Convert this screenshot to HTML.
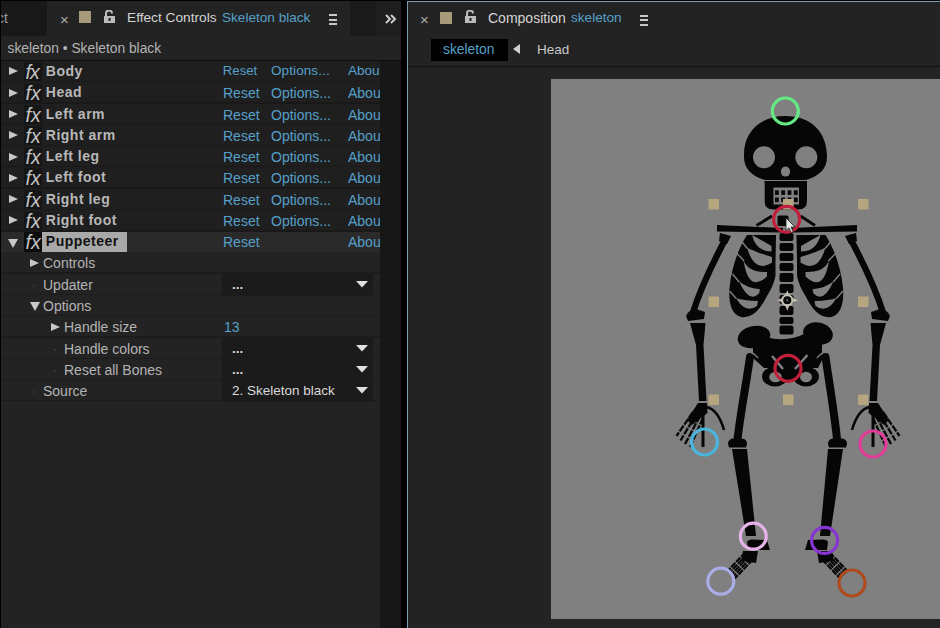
<!DOCTYPE html>
<html><head><meta charset="utf-8">
<style>
*{margin:0;padding:0;box-sizing:border-box}
html,body{width:940px;height:628px;overflow:hidden;background:#000}
body{position:relative;font-family:"Liberation Sans",sans-serif;font-size:14px;color:#b8b8b8}
.a{position:absolute}
.t{position:absolute;white-space:nowrap;line-height:16px}
.blue{color:#56a0ca}
#lp{left:1px;top:1px;width:400px;height:627px;background:#232323;overflow:hidden}
#rp{left:407px;top:1px;width:533px;height:627px;background:#232323;overflow:hidden;border-left:1px solid #7a9cb2;border-top:1px solid #7a9cb2}
.row{position:absolute;left:0;width:379px;height:21px;overflow:hidden}
.fxrow{background:#1f1f1f;border-top:1px solid transparent}
.fxrow::after,.subrow::after{content:"";position:absolute;left:0;right:0;bottom:0;height:1px;background:#191919}
.subrow{background:#232323;border-top:1px solid transparent;overflow:visible}
.subrow::after{background:#1c1c1c}
.tri{position:absolute;width:0;height:0;border-top:4.8px solid transparent;border-bottom:4.8px solid transparent;border-left:9.5px solid #c8c8c8}
.trid{position:absolute;width:0;height:0;border-left:5px solid transparent;border-right:5px solid transparent;border-top:9.5px solid #c8c8c8}
.fx{position:absolute;left:23px;top:0px;width:18px;height:20px;background:#161616;color:#c4c4c4;font-style:italic;font-size:19.5px;line-height:20px;padding-left:1.5px;white-space:nowrap}
.nm{left:44.8px;top:1px;font-weight:bold;color:#b8b8b8;font-size:14px;letter-spacing:0.5px}
.lk{top:1px;font-size:13.5px}
.lb{top:2px;font-size:13.5px;color:#b0b0b0}
.dv{top:2px;font-size:13.5px;color:#dadada}
.dd{position:absolute;left:221px;width:151px;background:#1b1b1b;z-index:1}
.dv,.arr{z-index:2}
.arr{position:absolute}
</style></head><body>
<!-- LEFT PANEL -->
<div id="lp" class="a">
  <div class="a" style="left:0;top:0;width:46px;height:35px;background:#181818"></div>
  <div class="t" style="left:-4px;top:9px;color:#9a9a9a;font-size:14px">ct</div>
  <div class="a" style="left:349px;top:0;width:26px;height:35px;background:#1a1a1a"></div>
  <div class="a" style="left:375px;top:0;width:25px;height:35px;background:#1e1e1e"></div>
  <!-- tab -->
  <div class="t" style="left:59px;top:11px;color:#aaa;font-size:15px">×</div>
  <div class="a" style="left:78px;top:10px;width:12px;height:12px;background:#a89b7b"></div>
  <svg class="a" style="left:101.8px;top:8.6px" width="13" height="14" viewBox="0 0 13 14"><path d="M3 6 V3.5 A3 3 0 0 1 9 3.5" fill="none" stroke="#bbb" stroke-width="2"/><rect x="1" y="6" width="11" height="7" fill="#bbb"/><rect x="5.5" y="8" width="2" height="3" fill="#232323"/></svg>
  <div class="t" style="left:126px;top:9px;color:#d4d4d4;font-size:13.7px">Effect Controls</div>
  <div class="t blue" style="left:221px;top:9px;font-size:13.6px">Skeleton black</div>
  <div class="a" style="left:328px;top:13px;width:8px;height:2px;background:#c8c8c8"></div>
  <div class="a" style="left:328px;top:17.5px;width:8px;height:2px;background:#c8c8c8"></div>
  <div class="a" style="left:328px;top:22px;width:8px;height:2px;background:#c8c8c8"></div>
  <svg class="a" style="left:383px;top:12px" width="14" height="12" viewBox="0 0 14 12"><path d="M2 2 L6 6 L2 10 M7 2 L11 6 L7 10" fill="none" stroke="#ccc" stroke-width="2"/></svg>
  <div class="t" style="left:6.5px;top:39.5px;color:#b4b4b4;font-size:13.8px">skeleton • Skeleton black</div>
  <div class="a" style="left:0;top:59px;width:400px;height:1px;background:#0e0e0e"></div>
  <div class="a" style="left:379px;top:60px;width:21px;height:567px;background:#171717"></div>

  <div id="rows"><!--ROWS--><div class="row fxrow" style="top:60px;height:21px"><div class="tri" style="left:8px;top:4.8px"></div><div class="fx"><span>f</span><span style="margin-left:-1px">x</span></div><div class="t nm">Body</div><div class="t blue lk" style="left:221.8px;font-size:13.2px">Reset</div><div class="t blue lk" style="left:270px;letter-spacing:0.1px">Options...</div><div class="t blue lk" style="left:347px">About</div></div>
<div class="row fxrow" style="top:81px;height:22px"><div class="tri" style="left:8px;top:4.8px"></div><div class="fx"><span>f</span><span style="margin-left:-1px">x</span></div><div class="t nm">Head</div><div class="t blue lk" style="left:221.8px;font-size:13.2px">Reset</div><div class="t blue lk" style="left:270px;letter-spacing:0.1px">Options...</div><div class="t blue lk" style="left:347px">About</div></div>
<div class="row fxrow" style="top:103px;height:21px"><div class="tri" style="left:8px;top:4.8px"></div><div class="fx"><span>f</span><span style="margin-left:-1px">x</span></div><div class="t nm">Left arm</div><div class="t blue lk" style="left:221.8px;font-size:13.2px">Reset</div><div class="t blue lk" style="left:270px;letter-spacing:0.1px">Options...</div><div class="t blue lk" style="left:347px">About</div></div>
<div class="row fxrow" style="top:124px;height:21px"><div class="tri" style="left:8px;top:4.8px"></div><div class="fx"><span>f</span><span style="margin-left:-1px">x</span></div><div class="t nm">Right arm</div><div class="t blue lk" style="left:221.8px;font-size:13.2px">Reset</div><div class="t blue lk" style="left:270px;letter-spacing:0.1px">Options...</div><div class="t blue lk" style="left:347px">About</div></div>
<div class="row fxrow" style="top:145px;height:21px"><div class="tri" style="left:8px;top:4.8px"></div><div class="fx"><span>f</span><span style="margin-left:-1px">x</span></div><div class="t nm">Left leg</div><div class="t blue lk" style="left:221.8px;font-size:13.2px">Reset</div><div class="t blue lk" style="left:270px;letter-spacing:0.1px">Options...</div><div class="t blue lk" style="left:347px">About</div></div>
<div class="row fxrow" style="top:166px;height:22px"><div class="tri" style="left:8px;top:4.8px"></div><div class="fx"><span>f</span><span style="margin-left:-1px">x</span></div><div class="t nm">Left foot</div><div class="t blue lk" style="left:221.8px;font-size:13.2px">Reset</div><div class="t blue lk" style="left:270px;letter-spacing:0.1px">Options...</div><div class="t blue lk" style="left:347px">About</div></div>
<div class="row fxrow" style="top:188px;height:21px"><div class="tri" style="left:8px;top:4.8px"></div><div class="fx"><span>f</span><span style="margin-left:-1px">x</span></div><div class="t nm">Right leg</div><div class="t blue lk" style="left:221.8px;font-size:13.2px">Reset</div><div class="t blue lk" style="left:270px;letter-spacing:0.1px">Options...</div><div class="t blue lk" style="left:347px">About</div></div>
<div class="row fxrow" style="top:209px;height:21px"><div class="tri" style="left:8px;top:4.8px"></div><div class="fx"><span>f</span><span style="margin-left:-1px">x</span></div><div class="t nm">Right foot</div><div class="t blue lk" style="left:221.8px;font-size:13.2px">Reset</div><div class="t blue lk" style="left:270px;letter-spacing:0.1px">Options...</div><div class="t blue lk" style="left:347px">About</div></div>
<div class="row" style="top:229px;height:22px;background:#2a2a2a;border-top:1px solid #1c1c1c"><div class="trid" style="left:7px;top:6.8px"></div><div class="fx" style="background:#0c0c0c;top:0.8px"><span>f</span><span style="margin-left:-1px">x</span></div><div class="a" style="left:41px;top:0px;width:85.5px;height:20px;background:#a9a9a9"></div><div class="t nm" style="color:#111;top:1.8px;letter-spacing:0.3px">Puppeteer</div><div class="t blue lk" style="left:221.8px;font-size:13.2px">Reset</div><div class="t blue lk" style="left:347px">About</div></div>
<div class="row subrow" style="top:251px;height:22px"><div class="tri" style="left:29px;top:4.8px"></div><div class="t lb" style="left:43px">Controls</div></div>
<div class="row subrow" style="top:273px;height:21px"><div class="a" style="left:32px;top:10px;width:2px;height:2px;background:#333"></div><div class="t lb" style="left:43px">Updater</div><div class="dd" style="top:-1px;height:20px"></div><div class="t dv" style="left:231px;font-weight:bold">...</div><svg class="arr" style="left:355px;top:6px" width="12" height="7" viewBox="0 0 12 7"><path d="M0 0H12L6 6.5Z" fill="#e0e0e0"/></svg></div>
<div class="row subrow" style="top:294px;height:21px"><div class="trid" style="left:29px;top:6px"></div><div class="t lb" style="left:43px">Options</div></div>
<div class="row subrow" style="top:315px;height:22px"><div class="tri" style="left:50px;top:4.8px"></div><div class="t lb" style="left:64px">Handle size</div><div class="t blue lk" style="left:224px">13</div></div>
<div class="row subrow" style="top:337px;height:21px"><div class="a" style="left:53px;top:10px;width:2px;height:2px;background:#333"></div><div class="t lb" style="left:64px">Handle colors</div><div class="dd" style="top:-1px;height:22px"></div><div class="t dv" style="left:231px;font-weight:bold">...</div><svg class="arr" style="left:355px;top:6px" width="12" height="7" viewBox="0 0 12 7"><path d="M0 0H12L6 6.5Z" fill="#e0e0e0"/></svg></div>
<div class="row subrow" style="top:358px;height:21px"><div class="a" style="left:53px;top:10px;width:2px;height:2px;background:#333"></div><div class="t lb" style="left:64px">Reset all Bones</div><div class="dd" style="top:-1px;height:22px"></div><div class="t dv" style="left:231px;font-weight:bold">...</div><svg class="arr" style="left:355px;top:6px" width="12" height="7" viewBox="0 0 12 7"><path d="M0 0H12L6 6.5Z" fill="#e0e0e0"/></svg></div>
<div class="row subrow" style="top:379px;height:21px"><div class="a" style="left:32px;top:10px;width:2px;height:2px;background:#333"></div><div class="t lb" style="left:43px">Source</div><div class="dd" style="top:-1px;height:21px"></div><div class="t dv" style="left:231px;">2. Skeleton black</div><svg class="arr" style="left:355px;top:6px" width="12" height="7" viewBox="0 0 12 7"><path d="M0 0H12L6 6.5Z" fill="#e0e0e0"/></svg></div><!--/ROWS--></div>
<div class="row fxrow" style="top:81.27px"><div class="tri" style="left:8px;top:5.5px"></div><div class="fx">fx</div><div class="t nm">Head</div><div class="t blue" style="left:222px;top:2px">Reset</div><div class="t blue" style="left:270px;top:2px">Options...</div><div class="t blue" style="left:347px;top:2px">About</div></div>
<div class="row fxrow" style="top:102.54px"><div class="tri" style="left:8px;top:5.5px"></div><div class="fx">fx</div><div class="t nm">Left arm</div><div class="t blue" style="left:222px;top:2px">Reset</div><div class="t blue" style="left:270px;top:2px">Options...</div><div class="t blue" style="left:347px;top:2px">About</div></div>
<div class="row fxrow" style="top:123.81px"><div class="tri" style="left:8px;top:5.5px"></div><div class="fx">fx</div><div class="t nm">Right arm</div><div class="t blue" style="left:222px;top:2px">Reset</div><div class="t blue" style="left:270px;top:2px">Options...</div><div class="t blue" style="left:347px;top:2px">About</div></div>
<div class="row fxrow" style="top:145.08px"><div class="tri" style="left:8px;top:5.5px"></div><div class="fx">fx</div><div class="t nm">Left leg</div><div class="t blue" style="left:222px;top:2px">Reset</div><div class="t blue" style="left:270px;top:2px">Options...</div><div class="t blue" style="left:347px;top:2px">About</div></div>
<div class="row fxrow" style="top:166.35px"><div class="tri" style="left:8px;top:5.5px"></div><div class="fx">fx</div><div class="t nm">Left foot</div><div class="t blue" style="left:222px;top:2px">Reset</div><div class="t blue" style="left:270px;top:2px">Options...</div><div class="t blue" style="left:347px;top:2px">About</div></div>
<div class="row fxrow" style="top:187.62px"><div class="tri" style="left:8px;top:5.5px"></div><div class="fx">fx</div><div class="t nm">Right leg</div><div class="t blue" style="left:222px;top:2px">Reset</div><div class="t blue" style="left:270px;top:2px">Options...</div><div class="t blue" style="left:347px;top:2px">About</div></div>
<div class="row fxrow" style="top:208.89px"><div class="tri" style="left:8px;top:5.5px"></div><div class="fx">fx</div><div class="t nm">Right foot</div><div class="t blue" style="left:222px;top:2px">Reset</div><div class="t blue" style="left:270px;top:2px">Options...</div><div class="t blue" style="left:347px;top:2px">About</div></div>
<div class="row" style="top:230.16px;background:#2a2a2a;border-top:1px solid #191919"><div class="trid" style="left:7px;top:6.5px"></div><div class="fx" style="background:#0c0c0c">fx</div><div class="a" style="left:41px;top:0px;width:85px;height:20px;background:#a9a9a9"></div><div class="t nm" style="color:#111">Puppeteer</div><div class="t blue" style="left:222px;top:2px">Reset</div><div class="t blue" style="left:347px;top:2px">About</div></div>
<div class="row subrow" style="top:251.43px"><div class="tri" style="left:29px;top:5.5px"></div><div class="t" style="left:42px;top:2px;color:#b4b4b4;font-size:14px">Controls</div></div>
<div class="row subrow" style="top:272.70px"><div class="a" style="left:32px;top:10px;width:2px;height:2px;background:#333"></div><div class="t" style="left:42px;top:2px;color:#b4b4b4;font-size:14px">Updater</div><div class="dd" style="top:1px;height:20px"></div><div class="t" style="left:230px;top:2px;color:#dcdcdc">...</div><div class="arr" style="left:355px;top:7px"></div></div>
<div class="row subrow" style="top:293.97px"><div class="trid" style="left:29px;top:6.5px"></div><div class="t" style="left:42px;top:2px;color:#b4b4b4;font-size:14px">Options</div></div>
<div class="row subrow" style="top:315.24px"><div class="tri" style="left:50px;top:5.5px"></div><div class="t" style="left:63px;top:2px;color:#b4b4b4;font-size:14px">Handle size</div><div class="t blue" style="left:223px;top:2px">13</div></div>
<div class="row subrow" style="top:336.51px"><div class="a" style="left:53px;top:10px;width:2px;height:2px;background:#333"></div><div class="t" style="left:63px;top:2px;color:#b4b4b4;font-size:14px">Handle colors</div><div class="dd" style="top:1px;height:20px"></div><div class="t" style="left:230px;top:2px;color:#dcdcdc">...</div><div class="arr" style="left:355px;top:7px"></div></div>
<div class="row subrow" style="top:357.78px"><div class="a" style="left:53px;top:10px;width:2px;height:2px;background:#333"></div><div class="t" style="left:63px;top:2px;color:#b4b4b4;font-size:14px">Reset all Bones</div><div class="dd" style="top:1px;height:20px"></div><div class="t" style="left:230px;top:2px;color:#dcdcdc">...</div><div class="arr" style="left:355px;top:7px"></div></div>
<div class="row subrow" style="top:379.05px"><div class="a" style="left:32px;top:10px;width:2px;height:2px;background:#333"></div><div class="t" style="left:42px;top:2px;color:#b4b4b4;font-size:14px">Source</div><div class="dd" style="top:1px;height:20px"></div><div class="t" style="left:230px;top:2px;color:#dcdcdc">2. Skeleton black</div><div class="arr" style="left:355px;top:7px"></div></div></div>
</div>
<!-- RIGHT PANEL -->
<div id="rp" class="a">
  <div class="t" style="left:12px;top:9.5px;color:#aaa;font-size:15px">×</div>
  <div class="a" style="left:32px;top:10px;width:12px;height:12px;background:#a89b7b"></div>
  <svg class="a" style="left:55.5px;top:8.3px" width="13" height="14" viewBox="0 0 13 14"><path d="M3 6 V3.5 A3 3 0 0 1 9 3.5" fill="none" stroke="#bbb" stroke-width="2"/><rect x="1" y="6" width="11" height="7" fill="#bbb"/><rect x="5.5" y="8" width="2" height="3" fill="#232323"/></svg>
  <div class="t" style="left:80px;top:8px;color:#d4d4d4;font-size:14px">Composition</div>
  <div class="t blue" style="left:163px;top:8px;font-size:13.6px">skeleton</div>
  <div class="a" style="left:232px;top:13px;width:8px;height:2px;background:#c8c8c8"></div>
  <div class="a" style="left:232px;top:17px;width:8px;height:2px;background:#c8c8c8"></div>
  <div class="a" style="left:232px;top:21.5px;width:8px;height:2px;background:#c8c8c8"></div>
  <div class="a" style="left:23px;top:37px;width:77px;height:22px;background:#000"></div>
  <div class="t blue" style="left:35px;top:40px;font-size:13.8px">skeleton</div>
  <div class="a" style="left:105px;top:42px;width:0;height:0;border-top:5.5px solid transparent;border-bottom:5.5px solid transparent;border-right:7px solid #d0d0d0"></div>
  <div class="t" style="left:129px;top:39.5px;color:#c8c8c8;font-size:13.5px">Head</div>
  <div class="a" style="left:0;top:64px;width:533px;height:1px;background:#121212"></div>
  <div class="a" style="left:143px;top:77px;width:400px;height:540px;background:#808080"></div>
</div>
<!--SKEL--><svg class="a" style="left:0;top:0" width="940" height="628" viewBox="0 0 940 628"><defs><clipPath id="cc"><rect x="551" y="79" width="389" height="540"/></clipPath></defs><g clip-path="url(#cc)"><path d="M744 157 C743 131 761 116 785.5 116 C810 116 827 131 827 157 C827 168 820 176 806 180 L765 180 C751 176 744 168 744 157 Z" fill="#060606"/><circle cx="764" cy="157.3" r="11" fill="#808080"/><circle cx="806.3" cy="157.3" r="11" fill="#808080"/><ellipse cx="785.5" cy="171.6" rx="4.6" ry="5" fill="#808080"/><path d="M764.5 181 L807 181 L807 201 Q807 209.5 798.5 209.5 L773 209.5 Q764.5 209.5 764.5 201 Z" fill="#060606"/><rect x="773.5" y="187.5" width="25.5" height="17" fill="#808080"/><rect x="775.0" y="190.3" width="3.8" height="4.6" fill="#060606"/><rect x="781.3" y="190.3" width="3.8" height="4.6" fill="#060606"/><rect x="787.6" y="190.3" width="3.8" height="4.6" fill="#060606"/><rect x="793.9" y="190.3" width="3.8" height="4.6" fill="#060606"/><rect x="775.0" y="197.5" width="3.8" height="4.6" fill="#060606"/><rect x="781.3" y="197.5" width="3.8" height="4.6" fill="#060606"/><rect x="787.6" y="197.5" width="3.8" height="4.6" fill="#060606"/><rect x="793.9" y="197.5" width="3.8" height="4.6" fill="#060606"/><path d="M764 183 L764 205 M807.5 183 L807.5 205" stroke="#808080" stroke-width="0.8"/><path d="M756.5 225.5 L772 216 M815 225.5 L800.5 216" stroke="#060606" stroke-width="3"/><rect x="777.5" y="215.5" width="11" height="10.5" rx="1.5" fill="#060606"/><path d="M717 225 L783 228 L783 232.5 L717 231.5 Z" fill="#060606"/><path d="M857 225 L791 228 L791 232.5 L857 231.5 Z" fill="#060606"/><rect x="779.5" y="233" width="14" height="8" rx="2" fill="#060606"/><rect x="779.5" y="243" width="14" height="8" rx="2" fill="#060606"/><rect x="779.5" y="253" width="14" height="8" rx="2" fill="#060606"/><rect x="779.5" y="263" width="14" height="8" rx="2" fill="#060606"/><rect x="779.5" y="273" width="14" height="9" rx="2" fill="#060606"/><rect x="779.5" y="284" width="14" height="9" rx="2" fill="#060606"/><rect x="779.5" y="295" width="14" height="9" rx="2" fill="#060606"/><rect x="779.5" y="306" width="14" height="9" rx="2" fill="#060606"/><rect x="779.5" y="317" width="14" height="7" rx="2" fill="#060606"/><rect x="779.5" y="325.5" width="14" height="9" rx="2" fill="#060606"/><path d="M776 235 L747 235 C738 249 731.5 268 729.5 288 C728.5 302 731 314 741 317 C752 318.5 760 310 767 296 C771 290 774 283 775.5 276 L775.5 262 Z" fill="#060606"/><path d="M 796.50 235.00 L 825.50 235.00 C 834.50 249.00 841.00 268.00 843.00 288.00 C 844.00 302.00 841.50 314.00 831.50 317.00 C 820.50 318.50 812.50 310.00 805.50 296.00 C 801.50 290.00 798.50 283.00 797.00 276.00 L 797.00 262.00 Z" fill="#060606"/><path d="M752 235 Q760.25 239.50 771.5 246 L771.5 251.5 Q756.25 251.75 752 235 Z" fill="#808080"/><path d="M 820.50 235.00 Q 812.25 239.50 801.00 246.00 L 801.00 251.50 Q 816.25 251.75 820.50 235.00 Z" fill="#808080"/><path d="M747 247.5 Q754.50 251.75 772 257 L772 262.5 Q754.50 274.00 747 247.5 Z" fill="#808080"/><path d="M 825.50 247.50 Q 818.00 251.75 800.50 257.00 L 800.50 262.50 Q 818.00 274.00 825.50 247.50 Z" fill="#808080"/><path d="M743.5 260.5 Q748.75 272.75 767 272 L767 276.5 Q748.75 293.50 743.5 260.5 Z" fill="#808080"/><path d="M 829.00 260.50 Q 823.75 272.75 805.50 272.00 L 805.50 276.50 Q 823.75 293.50 829.00 260.50 Z" fill="#808080"/><path d="M739 281.2 Q746.50 287.75 760 289.3 L759 293.5 Q749.00 303.65 739 281.2 Z" fill="#808080"/><path d="M 833.50 281.20 Q 826.00 287.75 812.50 289.30 L 813.50 293.50 Q 823.50 303.65 833.50 281.20 Z" fill="#808080"/><path d="M736 298 Q743.00 300.50 758 301 L757 306 Q745.50 314.40 736 298 Z" fill="#808080"/><path d="M 836.50 298.00 Q 829.50 300.50 814.50 301.00 L 815.50 306.00 Q 827.00 314.40 836.50 298.00 Z" fill="#808080"/><path d="M747.3 248.5 L740.5 240" stroke="#808080" stroke-width="1.4"/><path d="M 825.20 248.50 L 832.00 240.00" stroke="#808080" stroke-width="1.4"/><path d="M744.2 261 L736.5 253" stroke="#808080" stroke-width="1.4"/><path d="M 828.30 261.00 L 836.00 253.00" stroke="#808080" stroke-width="1.4"/><path d="M739.2 282 L732.5 274" stroke="#808080" stroke-width="1.4"/><path d="M 833.30 282.00 L 840.00 274.00" stroke="#808080" stroke-width="1.4"/><path d="M736.2 298.5 L729.5 291" stroke="#808080" stroke-width="1.4"/><path d="M 836.30 298.50 L 843.00 291.00" stroke="#808080" stroke-width="1.4"/><ellipse cx="754" cy="337" rx="16.5" ry="11" transform="rotate(-12 754 337)" fill="#060606"/><ellipse cx="818" cy="333.5" rx="15" ry="11" transform="rotate(14 818 333.5)" fill="#060606"/><path d="M753 346 L766 337 Q787 343 806 333 L822 344 L822 360 L818 368 L764 368 L753 358 Z" fill="#060606"/><ellipse cx="775" cy="376.5" rx="13" ry="10" fill="#060606"/><ellipse cx="806" cy="376.5" rx="13" ry="10" fill="#060606"/><rect x="775" y="360" width="31" height="20" fill="#060606"/><ellipse cx="775.5" cy="377" rx="6.3" ry="5.2" fill="#808080"/><ellipse cx="806" cy="377" rx="6" ry="5.2" fill="#808080"/><path d="M786 386.5 L790.5 380 L795 386.5 Z" fill="#808080"/><path d="M772 356 L783 369 M807.5 355 L795 369" stroke="#808080" stroke-width="2.5"/><path d="M726 238 C717 255 702 283 692.5 314" stroke="#060606" stroke-width="6.3" stroke-linecap="round" fill="none"/><path d="M 850.00 238.00 C 859.00 255.00 874.00 283.00 883.50 314.00" stroke="#060606" stroke-width="6.3" stroke-linecap="round" fill="none"/><path d="M720 233 L731 236 L727 244 L719 241 Z" fill="#060606"/><path d="M 856.00 233.00 L 845.00 236.00 L 849.00 244.00 L 857.00 241.00 Z" fill="#060606"/><path d="M686 316 Q688 310 696 309 L705 312 L704 319 L688 321 Z" fill="#060606"/><path d="M 890.00 316.00 Q 888.00 310.00 880.00 309.00 L 871.00 312.00 L 872.00 319.00 L 888.00 321.00 Z" fill="#060606"/><path d="M690 323 L705.5 323 L703.5 345 L706.5 401 L699 401 L696 345 Z" fill="#060606"/><path d="M 886.00 323.00 L 870.50 323.00 L 872.50 345.00 L 869.50 401.00 L 877.00 401.00 L 880.00 345.00 Z" fill="#060606"/><path d="M698 403 L707 403 L707.5 413 L692 425 L687 420 Z" fill="#060606"/><path d="M 878.00 403.00 L 869.00 403.00 L 868.50 413.00 L 884.00 425.00 L 889.00 420.00 Z" fill="#060606"/><path d="M693 412 L676.5 436" stroke="#060606" stroke-width="2.3" stroke-dasharray="7 1.3"/><path d="M 883.00 412.00 L 899.50 436.00" stroke="#060606" stroke-width="2.3" stroke-dasharray="7 1.3"/><path d="M696.5 414 L680.5 440.5" stroke="#060606" stroke-width="2.3" stroke-dasharray="7 1.3"/><path d="M 879.50 414.00 L 895.50 440.50" stroke="#060606" stroke-width="2.3" stroke-dasharray="7 1.3"/><path d="M700 416 L685 444" stroke="#060606" stroke-width="2.3" stroke-dasharray="7 1.3"/><path d="M 876.00 416.00 L 891.00 444.00" stroke="#060606" stroke-width="2.3" stroke-dasharray="7 1.3"/><path d="M703 418 L690 447" stroke="#060606" stroke-width="2.3" stroke-dasharray="7 1.3"/><path d="M 873.00 418.00 L 886.00 447.00" stroke="#060606" stroke-width="2.3" stroke-dasharray="7 1.3"/><path d="M706 407 Q718 409 724 430" stroke="#060606" stroke-width="2.6" fill="none"/><path d="M 870.00 407.00 Q 858.00 409.00 852.00 430.00" stroke="#060606" stroke-width="2.6" fill="none"/><path d="M703 412 L703 447" stroke="#060606" stroke-width="3" fill="none"/><path d="M 873.00 412.00 L 873.00 447.00" stroke="#060606" stroke-width="3" fill="none"/><path d="M750 357 C746 385 741 410 737.5 439" stroke="#060606" stroke-width="8" stroke-linecap="round" fill="none"/><path d="M742 351 Q752 350 758 358" stroke="#808080" stroke-width="1.5" fill="none"/><path d="M833 351 Q823 350 817 358" stroke="#808080" stroke-width="1.5" fill="none"/><path d="M825.5 357 C829.5 385 834 410 837 439" stroke="#060606" stroke-width="8" stroke-linecap="round" fill="none"/><path d="M728 444 Q728 438.5 734 438.5 L742 438.5 Q747 439 747 444 L746 447.5 L729 447.5 Z" fill="#060606"/><path d="M847 444 Q847 438.5 841 438.5 L833 438.5 Q828 439 828 444 L829 447.5 L846 447.5 Z" fill="#060606"/><path d="M732 449 L747 449 L756 536 L746 536 Z" fill="#060606"/><path d="M843 449 L828 449 L820 536 L830 536 Z" fill="#060606"/><path d="M747 542 Q748 539.5 752 539.5 L767 540 L770 550 L748 550 Z" fill="#060606"/><path d="M743 551 L758 551 L756 563 L741 561 Z" fill="#060606"/><path d="M745.3 552.4 L727.3 571.4" stroke="#060606" stroke-width="2.2" stroke-dasharray="6 1.2"/><path d="M747.1 554.2 L729.1 573.2" stroke="#060606" stroke-width="2.2" stroke-dasharray="6 1.2"/><path d="M749.0 556.0 L731.0 575.0" stroke="#060606" stroke-width="2.2" stroke-dasharray="6 1.2"/><path d="M750.9 557.8 L732.9 576.8" stroke="#060606" stroke-width="2.2" stroke-dasharray="6 1.2"/><path d="M752.7 559.6 L734.7 578.6" stroke="#060606" stroke-width="2.2" stroke-dasharray="6 1.2"/><path d="M828.0 542 Q827.0 539.5 823.0 539.5 L808.0 540 L805.0 550 L827.0 550 Z" fill="#060606"/><path d="M832.0 551 L817.0 551 L819.0 563 L834.0 561 Z" fill="#060606"/><path d="M829.7 552.4 L847.7 571.4" stroke="#060606" stroke-width="2.2" stroke-dasharray="6 1.2"/><path d="M827.9 554.2 L845.9 573.2" stroke="#060606" stroke-width="2.2" stroke-dasharray="6 1.2"/><path d="M826.0 556.0 L844.0 575.0" stroke="#060606" stroke-width="2.2" stroke-dasharray="6 1.2"/><path d="M824.1 557.8 L842.1 576.8" stroke="#060606" stroke-width="2.2" stroke-dasharray="6 1.2"/><path d="M822.3 559.6 L840.3 578.6" stroke="#060606" stroke-width="2.2" stroke-dasharray="6 1.2"/><rect x="708.5" y="199" width="10.5" height="10.5" fill="#b5a67f"/><rect x="783" y="199" width="10.5" height="10.5" fill="#b5a67f"/><rect x="858" y="199" width="10.5" height="10.5" fill="#b5a67f"/><rect x="708.5" y="296.5" width="10.5" height="10.5" fill="#b5a67f"/><rect x="858" y="296.5" width="10.5" height="10.5" fill="#b5a67f"/><rect x="708.5" y="394.5" width="10.5" height="10.5" fill="#b5a67f"/><rect x="783" y="394.5" width="10.5" height="10.5" fill="#b5a67f"/><rect x="858" y="394.5" width="10.5" height="10.5" fill="#b5a67f"/><circle cx="785.3" cy="111" r="13" fill="none" stroke="#64ea84" stroke-width="3.2"/><circle cx="786.6" cy="219.3" r="13" fill="none" stroke="#c21f3c" stroke-width="3.2"/><circle cx="788" cy="368.3" r="13" fill="none" stroke="#c21f3c" stroke-width="3.2"/><circle cx="704.5" cy="442" r="13" fill="none" stroke="#4ab5dc" stroke-width="3.2"/><circle cx="873" cy="444" r="13" fill="none" stroke="#e23c98" stroke-width="3.2"/><circle cx="753.3" cy="536.2" r="13" fill="none" stroke="#e6b2ea" stroke-width="3.2"/><circle cx="824.6" cy="540.4" r="13" fill="none" stroke="#8634d2" stroke-width="3.2"/><circle cx="720.8" cy="581.2" r="13" fill="none" stroke="#a9aee6" stroke-width="3.2"/><circle cx="852" cy="583" r="13" fill="none" stroke="#ae4a1e" stroke-width="3.2"/><circle cx="787.3" cy="300.3" r="5.1" fill="none" stroke="#c2beb0" stroke-width="2.2"/><circle cx="787.3" cy="300.3" r="3.6" fill="#0a0a0a"/><circle cx="787.3" cy="300.3" r="1" fill="#777"/><path d="M787.3 290.3 L789.3 295 L785.3 295 Z M787.3 310.8 L789.3 305.6 L785.3 305.6 Z M777.3 300.3 L782 298.3 L782 302.3 Z M798.5 300.3 L792.6 298.3 L792.6 302.3 Z" fill="#c2beb0"/><path d="M786 218 L786 230.5 L789 228 L791.3 232.5 L793.2 231.6 L791 227 L795 227 Z" fill="#e8e8e8" stroke="#222" stroke-width="0.8"/></g></svg><!--/SKEL-->
</body></html>
